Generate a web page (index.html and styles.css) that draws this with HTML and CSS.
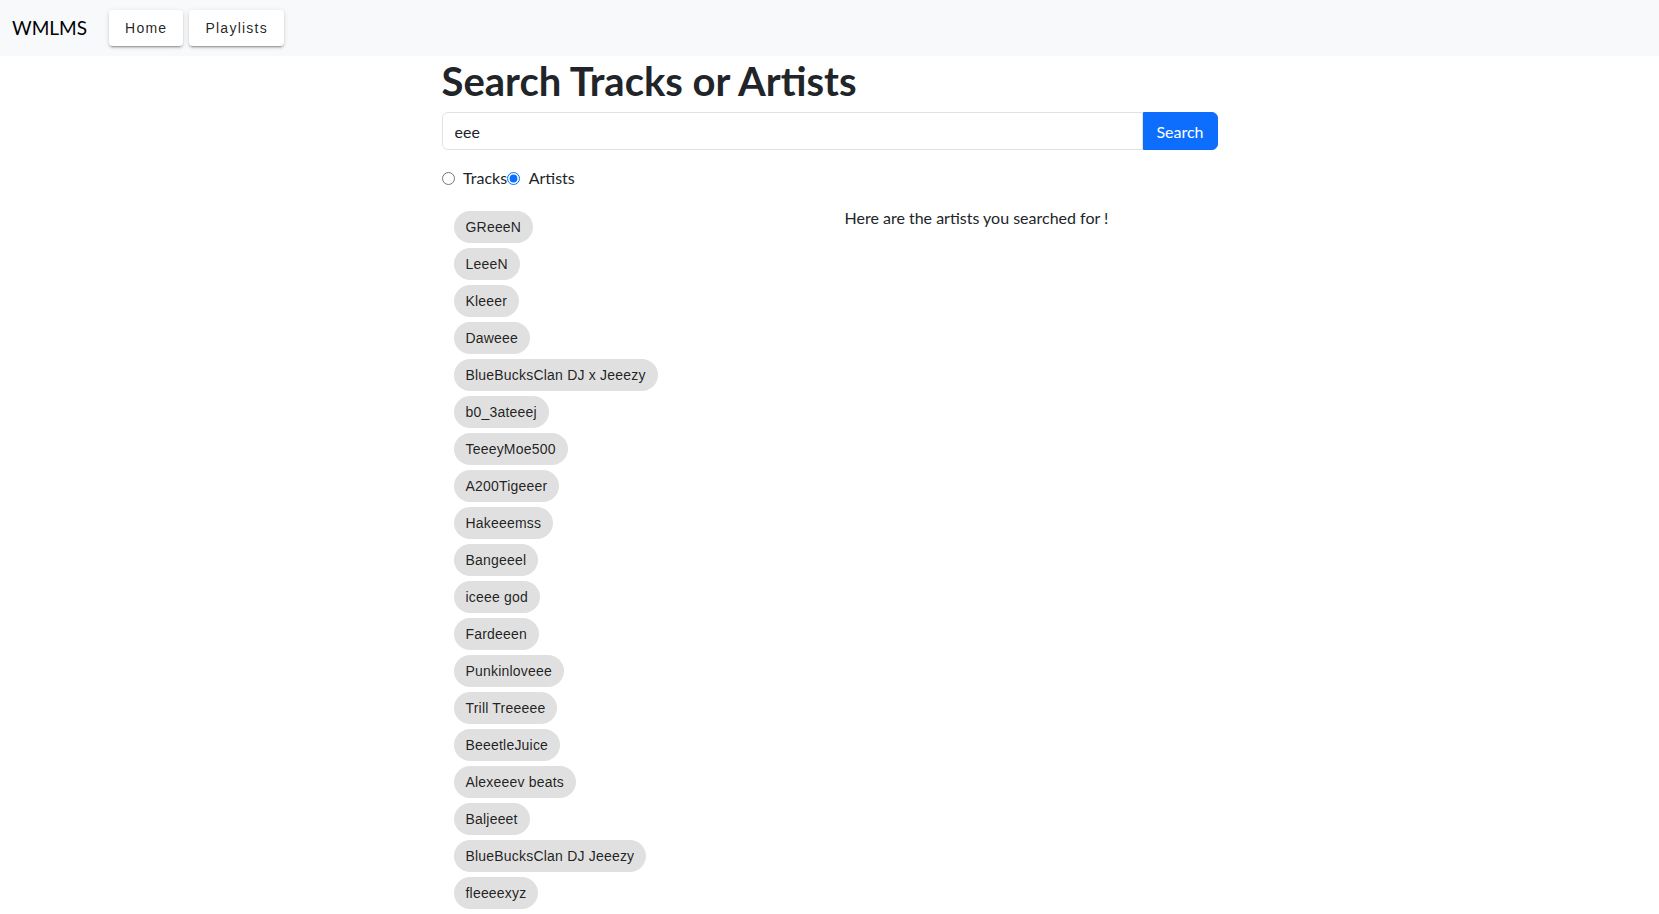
FILE: index.html
```html
<!DOCTYPE html>
<html lang="en">
<head>
<meta charset="utf-8">
<title>WMLMS</title>
<link rel="stylesheet" href="styles.css">
</head>
<body>
<nav class="navbar">
  <span class="brand">WMLMS</span>
  <button class="nav-btn" type="button">Home</button>
  <button class="nav-btn" type="button">Playlists</button>
</nav>
<main class="main">
  <h1 class="title">Search Tracks or Artists</h1>
  <form class="search">
    <input class="search-input" type="text" value="eee">
    <button class="search-btn" type="button">Search</button>
  </form>
  <div class="radios">
    <input class="radio" type="radio" name="kind" id="r-tracks"><label for="r-tracks"> Tracks</label><input class="radio" type="radio" name="kind" id="r-artists" checked><label for="r-artists"> Artists</label>
  </div>
  <div class="results">
    <ul class="chips">
      <li class="chip">GReeeN</li>
      <li class="chip">LeeeN</li>
      <li class="chip">Kleeer</li>
      <li class="chip">Daweee</li>
      <li class="chip">BlueBucksClan DJ x Jeeezy</li>
      <li class="chip">b0_3ateeej</li>
      <li class="chip">TeeeyMoe500</li>
      <li class="chip">A200Tigeeer</li>
      <li class="chip">Hakeeemss</li>
      <li class="chip">Bangeeel</li>
      <li class="chip">iceee god</li>
      <li class="chip">Fardeeen</li>
      <li class="chip">Punkinloveee</li>
      <li class="chip">Trill Treeeee</li>
      <li class="chip">BeeetleJuice</li>
      <li class="chip">Alexeeev beats</li>
      <li class="chip">Baljeeet</li>
      <li class="chip">BlueBucksClan DJ Jeeezy</li>
      <li class="chip">fleeeexyz</li>
    </ul>
    <p class="msg">Here are the artists you searched for !</p>
  </div>
</main>
</body>
</html>
```

FILE: styles.css
```css
* { box-sizing: border-box; }
html, body { margin: 0; padding: 0; }
body {
  font-family: Lato, "Noto Sans", sans-serif;
  font-size: 16px;
  line-height: 1.5;
  color: #212529;
  background: #fff;
}
.navbar {
  height: 56px;
  background: #f8f9fa;
  display: flex;
  align-items: center;
  padding: 0 12px;
}
.brand {
  font-size: 19px;
  margin-right: 22px;
  color: #000;
}
.nav-btn {
  font-family: "Liberation Sans", Arial, sans-serif;
  font-size: 14px;
  letter-spacing: 1.25px;
  color: rgba(0,0,0,0.87);
  background: #fff;
  border: 0;
  border-radius: 4px;
  padding: 0 16px;
  height: 36px;
  margin-right: 6px;
  box-shadow: 0 3px 1px -2px rgba(0,0,0,0.2), 0 2px 2px 0 rgba(0,0,0,0.14), 0 1px 5px 0 rgba(0,0,0,0.12);
}
.main {
  width: 776px;
  margin: 0 auto;
}
.title {
  font-size: 40px;
  font-weight: 700;
  line-height: 1.2;
  margin: 1px 0 7px;
}
.search {
  display: flex;
  margin: 0;
}
.search-input {
  flex: 1;
  height: 38px;
  font-family: inherit;
  font-size: 16px;
  color: #212529;
  padding: 6px 12px;
  border: 1px solid #dee2e6;
  border-radius: 6px 0 0 6px;
  outline: none;
}
.search-btn {
  height: 38px;
  width: 75px;
  font-family: inherit;
  font-size: 16px;
  color: #fff;
  background: #0d6efd;
  border: 1px solid #0d6efd;
  border-radius: 0 6px 6px 0;
  padding: 0;
}
.radios {
  margin-top: 16px;
  height: 24px;
}
.radio {
  margin: 6px 5px 0 0;
  vertical-align: top;
  accent-color: #0d6efd;
}
.results {
  display: flex;
  margin-top: 16px;
}
.chips {
  list-style: none;
  margin: 0;
  padding: 5px 0 0 12px;
  width: 403px;
  display: flex;
  flex-direction: column;
  align-items: flex-start;
  gap: 5px;
}
.chip {
  font-family: "Liberation Sans", Arial, sans-serif;
  font-size: 14px;
  letter-spacing: 0.2px;
  color: rgba(0,0,0,0.87);
  background: #e0e0e0;
  height: 32px;
  line-height: 32px;
  border-radius: 16px;
  padding: 0 12px;
  white-space: nowrap;
}
.msg {
  margin: 0;
}
```
